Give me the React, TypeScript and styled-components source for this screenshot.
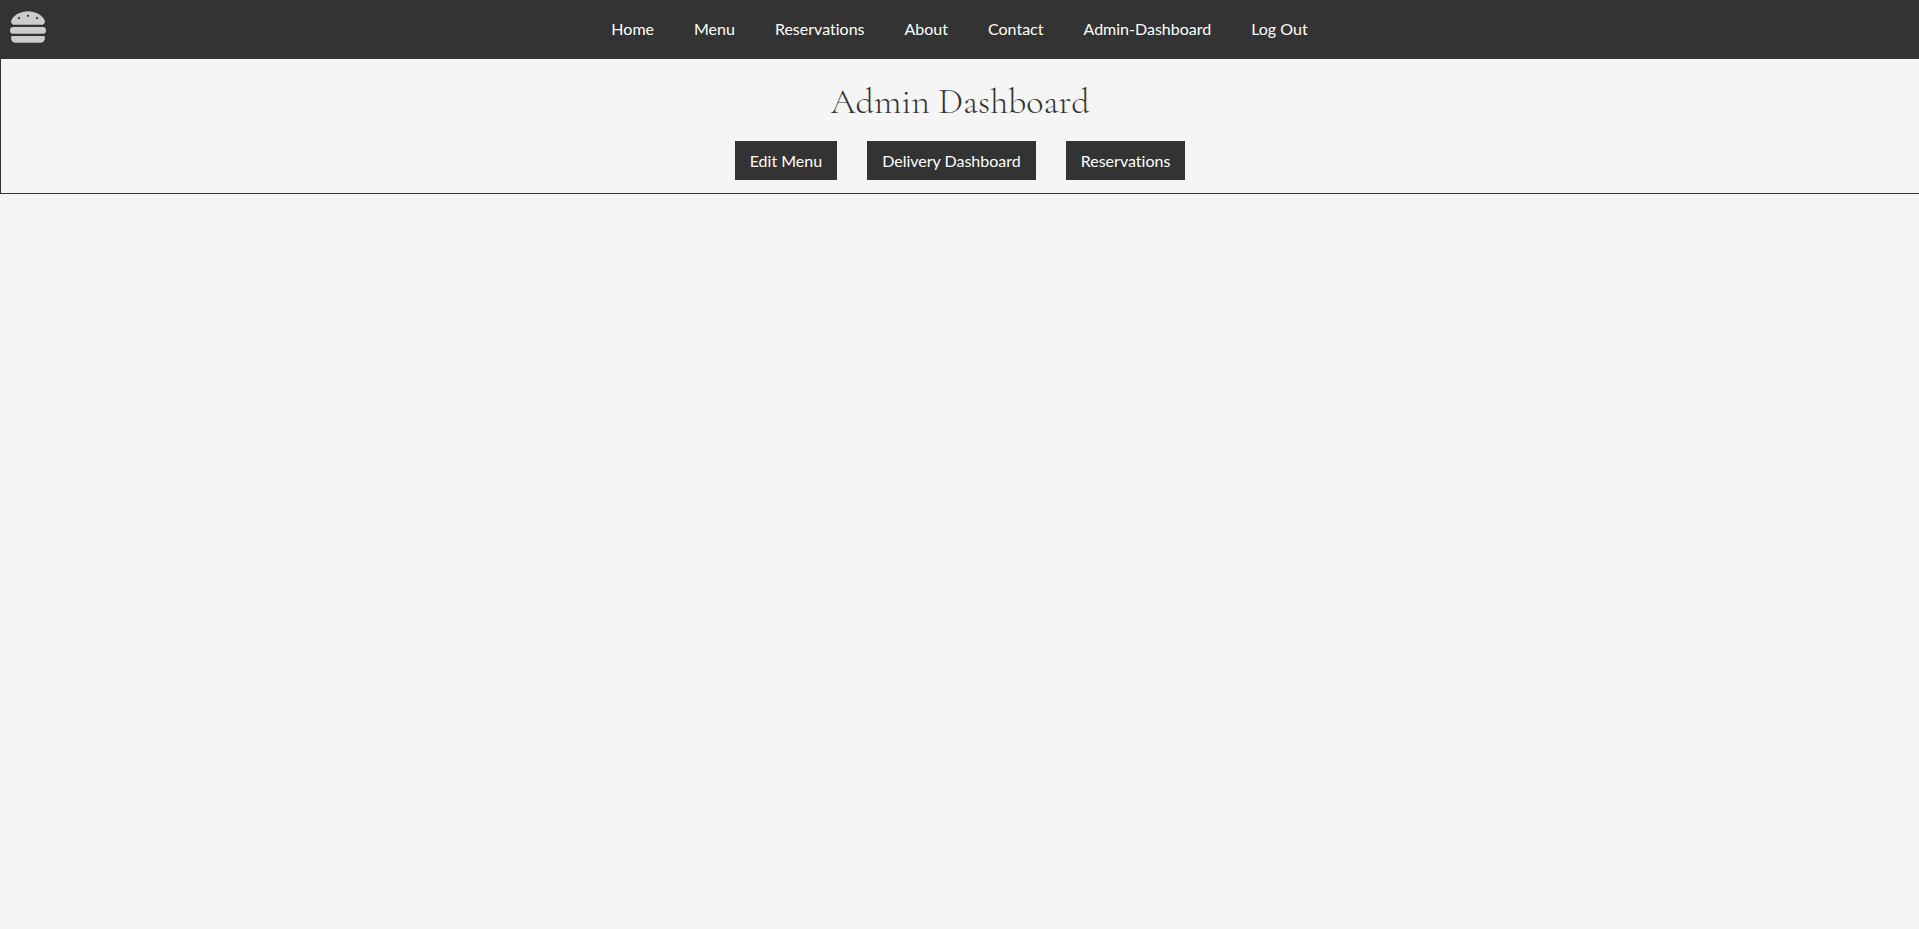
import React from "react";
import styled, { createGlobalStyle } from "styled-components";
import { FaHamburger } from "react-icons/fa";

const GlobalStyle = createGlobalStyle`
  *, *::before, *::after {
    box-sizing: border-box;
  }

  body {
    margin: 0;
    background: #f5f5f5;
    color: #333;
    font-family: Lato, "Liberation Sans", sans-serif;
    font-size: 16px;
    font-variant-ligatures: none;
    line-height: 19px;
  }
`;

const Header = styled.header`
  display: grid;
  grid-template-columns: 1fr auto 1fr;
  align-items: center;
  padding: 0 10px 2px;
  min-height: 59px;
  background: #333;
`;

const Brand = styled.a`
  display: flex;
  justify-self: start;
  padding-bottom: 4px;
  color: #ccc;
  font-size: 36px;
`;

const NavList = styled.ul`
  display: flex;
  gap: 40px;
  margin: 0;
  padding: 0;
  list-style: none;
`;

const NavLink = styled.a`
  color: #fff;
  text-decoration: none;
`;

const Panel = styled.main`
  display: flex;
  flex-direction: column;
  align-items: center;
  gap: 18px;
  padding: 22px 0 13px;
  border-left: 1px solid #333;
  border-bottom: 1px solid #333;
`;

const Title = styled.h1`
  margin: 0;
  font-family: "Cormorant Garamond", "Liberation Serif", serif;
  font-size: 36px;
  font-weight: 300;
  line-height: 42px;
`;

const Actions = styled.div`
  display: flex;
  flex-wrap: wrap;
  justify-content: center;
  gap: 30px;
`;

const ActionButton = styled.button`
  padding: 10px 15px;
  border: 0;
  background: #333;
  color: #fff;
  font: inherit;
  cursor: pointer;
`;

const links = [
  "Home",
  "Menu",
  "Reservations",
  "About",
  "Contact",
  "Admin-Dashboard",
  "Log Out",
];

const actions = ["Edit Menu", "Delivery Dashboard", "Reservations"];

export default function App() {
  return (
    <>
      <GlobalStyle />
      <Header>
        <Brand href="#home" aria-label="Restaurant home">
          <FaHamburger aria-hidden="true" />
        </Brand>
        <nav aria-label="Main">
          <NavList>
            {links.map((label) => (
              <li key={label}>
                <NavLink href={`#${label.toLowerCase().replace(" ", "-")}`}>
                  {label}
                </NavLink>
              </li>
            ))}
          </NavList>
        </nav>
      </Header>
      <Panel>
        <Title>Admin Dashboard</Title>
        <Actions>
          {actions.map((label) => (
            <ActionButton key={label} type="button">
              {label}
            </ActionButton>
          ))}
        </Actions>
      </Panel>
    </>
  );
}
